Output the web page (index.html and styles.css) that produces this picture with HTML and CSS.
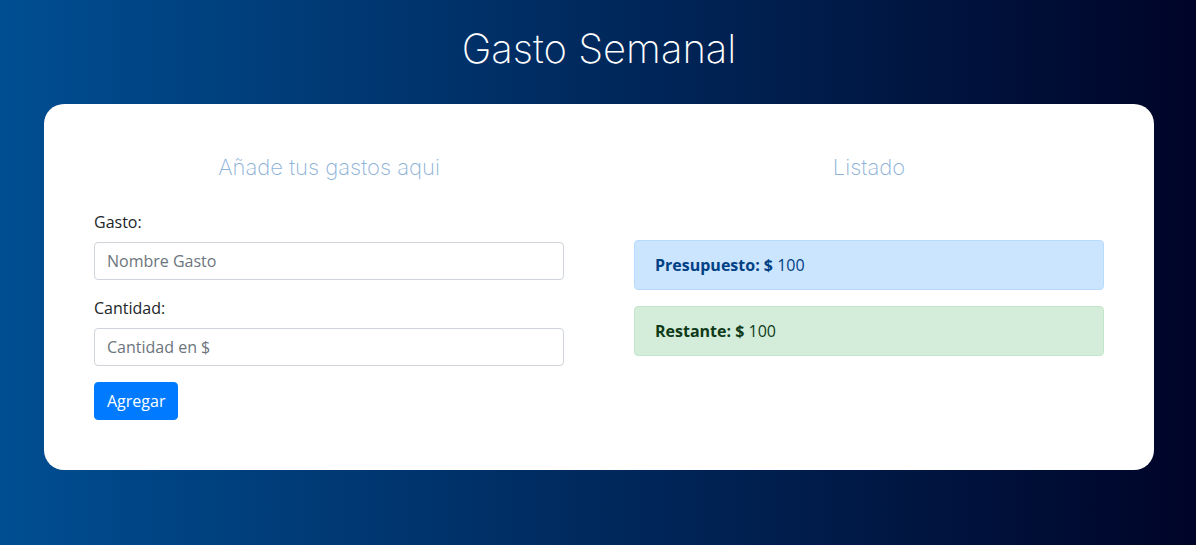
FILE: index.html
```html
<!DOCTYPE html>
<html lang="es">
<head>
<meta charset="utf-8">
<title>Gasto Semanal</title>
<link rel="stylesheet" href="styles.css">
</head>
<body>
<div class="container">
  <header class="header">
    <h1 class="title">Gasto Semanal</h1>
  </header>
  <main class="card">
    <section class="col">
      <h2 class="subtitle">Añade tus gastos aqui</h2>
      <form class="form">
        <div class="form-group">
          <label class="label" for="gasto">Gasto:</label>
          <input class="input" id="gasto" type="text" placeholder="Nombre Gasto">
        </div>
        <div class="form-group">
          <label class="label" for="cantidad">Cantidad:</label>
          <input class="input" id="cantidad" type="text" placeholder="Cantidad en $">
        </div>
        <button class="btn" type="button">Agregar</button>
      </form>
    </section>
    <section class="col">
      <h2 class="subtitle">Listado</h2>
      <div class="list">
        <div class="alert alert-primary"><strong>Presupuesto: $</strong> 100</div>
        <div class="alert alert-success"><strong>Restante: $</strong> 100</div>
      </div>
    </section>
  </main>
</div>
</body>
</html>
```

FILE: styles.css
```css
* { box-sizing: border-box; }
html, body { height: 100%; }
body {
  margin: 0;
  padding-left: 2px;
  background: linear-gradient(to right, #004e92, #000428);
  font-family: "Open Sans", "Noto Sans", sans-serif;
  font-size: 16px;
  line-height: 1.5;
  color: #212529;
}
.container {
  width: 1110px;
  margin: 0 auto;
}
.header {
  height: 104px;
  display: flex;
  align-items: center;
  justify-content: center;
}
.title {
  margin: 0;
  padding-bottom: 6px;
  font-family: "Inter", "Lato", sans-serif;
  font-weight: 200;
  font-size: 40px;
  line-height: 1.2;
  color: #fff;
}
.card {
  background: #fff;
  border-radius: 20px;
  padding: 50px;
  display: grid;
  grid-template-columns: 1fr 1fr;
  column-gap: 70px;
}
.subtitle {
  margin: 0 0 30px;
  text-align: center;
  font-family: "Inter", "Lato", sans-serif;
  font-weight: 200;
  font-size: 22px;
  line-height: 26px;
  color: #8db2d8;
}
.form-group { margin-bottom: 16px; }
.label {
  display: block;
  margin-bottom: 8px;
  line-height: 24px;
}
.input {
  display: block;
  width: 100%;
  height: 38px;
  padding: 6px 12px;
  font: inherit;
  color: #495057;
  border: 1px solid #ced4da;
  border-radius: 4px;
  background: #fff;
}
.input::placeholder { color: #6c757d; }
.btn {
  display: inline-block;
  height: 38px;
  padding: 6px 12px;
  font: inherit;
  color: #fff;
  background: #007bff;
  border: 1px solid #007bff;
  border-radius: 4px;
}
.list { padding-top: 30px; }
.alert {
  padding: 12px 20px;
  margin-bottom: 16px;
  border: 1px solid transparent;
  border-radius: 4px;
  line-height: 24px;
}
.alert strong { font-weight: 700; }
.alert-primary { color: #004085; background: #cce5ff; border-color: #b8daff; }
.alert-success { color: #0e3a18; background: #d4edda; border-color: #c3e6cb; }
```
